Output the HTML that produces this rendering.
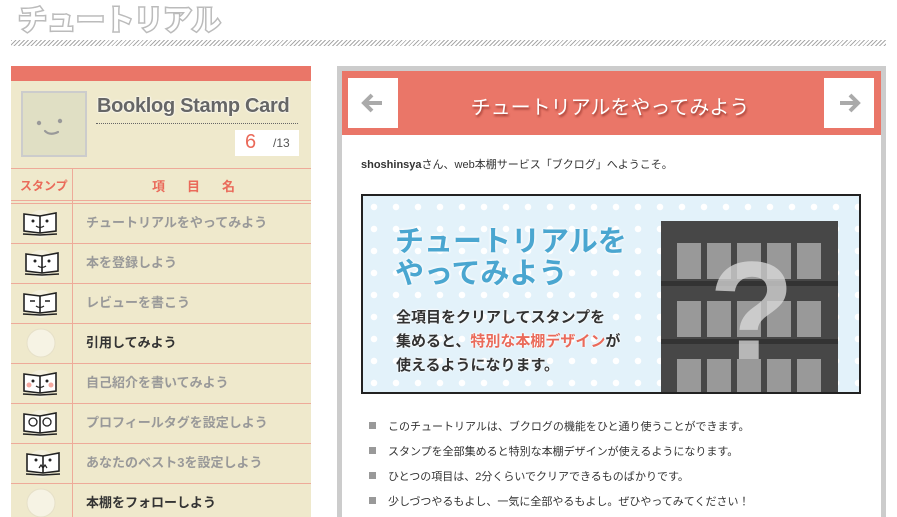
<!DOCTYPE html>
<html><head><meta charset="utf-8"><style>
*{margin:0;padding:0;box-sizing:border-box}
html,body{width:897px;height:517px;overflow:hidden}
body{background:#fff;position:relative;font-family:"Liberation Sans","Noto Sans CJK JP",sans-serif}
.a{position:absolute}
.h1{left:18px;top:3px;font-size:29px;line-height:36px;font-weight:bold;color:#fff;-webkit-text-stroke:3px #bbb;paint-order:stroke fill}
.hatch{left:11px;top:40px;width:875px;height:6px;background:repeating-linear-gradient(135deg,#aaa 0 1px,#fff 1px 3px)}
.card{left:11px;top:66px;width:300px;height:451px;background:#efe9cc}
.rows div.r{position:absolute;left:0;width:300px;height:40px;border-top:1px solid #eeaa99}
.rows .t{position:absolute;left:75px;top:8px;font-size:13px;font-weight:bold;color:#999}
.rows .t.d{color:#333}
.ic{position:absolute;left:10px;top:3px}
.bl{position:absolute;left:0;font-size:11px;color:#333}
.bl i{position:absolute;left:369px;width:7px;height:7px;background:#999}
.dots{background-color:#e3f2fa;background-image:radial-gradient(circle,#fff 3px,transparent 3.5px);background-size:22px 22px}
</style></head><body>
<div class="a hatch"></div>
<div class="a h1">チュートリアル</div>

<div class="a card">
 <div class="a" style="left:0;top:0;width:300px;height:15px;background:#ea7668"></div>
 <div class="a" style="left:10px;top:25px;width:66px;height:66px;border:2px solid #ccc;background:#e0dfc4">
  <svg width="62" height="62"><circle cx="16" cy="30" r="2.2" fill="#999"/><circle cx="37" cy="28" r="2.2" fill="#999"/><path d="M22 38 q5 5 13 1" stroke="#999" stroke-width="2.2" fill="none" stroke-linecap="round"/></svg>
 </div>
 <div class="a" style="left:86px;top:29px;font-size:20px;font-weight:bold;color:#666;text-shadow:0 0 2px #fff,0 0 2px #fff;white-space:nowrap;letter-spacing:-0.3px">Booklog Stamp Card</div>
 <div class="a" style="left:85px;top:57px;width:202px;border-top:1px dotted #666"></div>
 <div class="a" style="left:224px;top:64px;width:64px;height:26px;background:#fff"><span class="a" style="left:10px;top:1px;font-size:20px;color:#ea6a5a">6</span><span class="a" style="left:38px;top:6px;font-size:12px;color:#555">/13</span></div>
 <div class="a" style="left:0;top:102px;width:300px;border-top:1px solid #eeaa99"></div>
 <div class="a" style="left:61px;top:102px;height:349px;border-left:1px solid #eeaa99"></div>
 <div class="a" style="left:9px;top:111px;font-size:12px;font-weight:bold;color:#ea6a5a">スタンプ</div>
 <div class="a" style="left:141px;top:110px;font-size:13px;font-weight:bold;color:#ea6a5a;letter-spacing:22px">項目名</div>
 <div class="a" style="left:0;top:134px;width:300px;border-top:1px solid #eeaa99"></div>
 <div class="rows">
  <div class="r" style="top:137px"><svg class="ic" width="40" height="32"><circle cx="20" cy="17" r="14" fill="#f4f0de"/><path d="M3 7 L19 9 L35 6 L35 24 L19 26 L3 24Z" fill="#fff" stroke="#222" stroke-width="1.6"/><path d="M19 9 V26 M2 27 L19 28 L36 27" stroke="#222" stroke-width="1.6" fill="none"/><circle cx="12" cy="14" r="1.5" fill="#222"/><circle cx="26" cy="14" r="1.5" fill="#222"/><path d="M15 19 q4 3 8 0" stroke="#222" fill="none" stroke-width="1.2"/></svg><span class="t">チュートリアルをやってみよう</span></div>
  <div class="r" style="top:177px"><svg class="ic" width="40" height="32"><circle cx="20" cy="17" r="14" fill="#f4f0de"/><path d="M5 7 L21 9 L37 6 L37 24 L21 26 L5 24Z" fill="#fff" stroke="#222" stroke-width="1.6"/><path d="M21 9 V26 M4 27 L21 28 L38 27" stroke="#222" stroke-width="1.6" fill="none"/><circle cx="14" cy="14" r="1.5" fill="#222"/><circle cx="28" cy="14" r="1.5" fill="#222"/><path d="M17 19 q4 3 8 0" stroke="#222" fill="none" stroke-width="1.2"/></svg><span class="t">本を登録しよう</span></div>
  <div class="r" style="top:217px"><svg class="ic" width="40" height="32"><circle cx="20" cy="17" r="14" fill="#f4f0de"/><path d="M3 7 L19 9 L35 6 L35 24 L19 26 L3 24Z" fill="#fff" stroke="#222" stroke-width="1.6"/><path d="M19 9 V26 M2 27 L19 28 L36 27 M9 14 h5 M24 14 h5" stroke="#222" stroke-width="1.6" fill="none"/><path d="M15 19 q4 3 8 0" stroke="#222" fill="none" stroke-width="1.2"/></svg><span class="t">レビューを書こう</span></div>
  <div class="r" style="top:257px"><svg class="ic" width="40" height="32"><circle cx="20" cy="16" r="14" fill="#f6f3e4" stroke="#e6e0c8"/></svg><span class="t d">引用してみよう</span></div>
  <div class="r" style="top:297px"><svg class="ic" width="40" height="32"><circle cx="20" cy="17" r="14" fill="#f4f0de"/><path d="M3 7 L19 9 L35 6 L35 24 L19 26 L3 24Z" fill="#fff" stroke="#222" stroke-width="1.6"/><path d="M19 9 V26 M2 27 L19 28 L36 27" stroke="#222" stroke-width="1.6" fill="none"/><circle cx="8" cy="18" r="2.5" fill="#f4a9a0"/><circle cx="30" cy="18" r="2.5" fill="#f4a9a0"/><circle cx="12" cy="14" r="1.5" fill="#222"/><circle cx="26" cy="14" r="1.5" fill="#222"/><path d="M15 19 q4 3 8 0" stroke="#222" fill="none" stroke-width="1.2"/></svg><span class="t">自己紹介を書いてみよう</span></div>
  <div class="r" style="top:337px"><svg class="ic" width="40" height="32"><circle cx="20" cy="17" r="14" fill="#f4f0de"/><path d="M3 7 L19 9 L35 6 L35 24 L19 26 L3 24Z" fill="#fff" stroke="#222" stroke-width="1.6"/><path d="M19 9 V26 M2 27 L19 28 L36 27" stroke="#222" stroke-width="1.6" fill="none"/><circle cx="12" cy="15" r="4" fill="none" stroke="#222" stroke-width="1.3"/><circle cx="26" cy="15" r="4" fill="none" stroke="#222" stroke-width="1.3"/></svg><span class="t">プロフィールタグを設定しよう</span></div>
  <div class="r" style="top:377px"><svg class="ic" width="40" height="32"><circle cx="20" cy="17" r="14" fill="#f4f0de"/><path d="M6 7 L22 9 L38 6 L38 24 L22 26 L6 24Z" fill="#fff" stroke="#222" stroke-width="1.6"/><path d="M22 9 V26 M5 27 L22 28 L39 27" stroke="#222" stroke-width="1.6" fill="none"/><circle cx="15" cy="13" r="1.5" fill="#222"/><circle cx="29" cy="13" r="1.5" fill="#222"/><path d="M18 21 l2-3 2 3 2-3 2 3" stroke="#222" fill="none" stroke-width="1.2"/></svg><span class="t">あなたのベスト3を設定しよう</span></div>
  <div class="r" style="top:417px"><svg class="ic" width="40" height="32"><circle cx="20" cy="16" r="14" fill="#f6f3e4" stroke="#e6e0c8"/></svg><span class="t d">本棚をフォローしよう</span></div>
 </div>
</div>

<div class="a" style="left:337px;top:66px;width:549px;height:451px;border:5px solid #ccc;border-bottom:none;background:#fff"></div>
<div class="a" style="left:342px;top:71px;width:539px;height:64px;background:#ea7668"></div>
<div class="a" style="left:348px;top:78px;width:50px;height:50px;background:#fff"><svg width="50" height="50"><path d="M34 25 H16 M24 17 L16 25 L24 33" stroke="#aaa" stroke-width="4" fill="none"/></svg></div>
<div class="a" style="left:824px;top:78px;width:50px;height:50px;background:#fff"><svg width="50" height="50"><path d="M16 25 H34 M26 17 L34 25 L26 33" stroke="#aaa" stroke-width="4" fill="none"/></svg></div>
<div class="a" style="left:400px;top:91px;width:420px;text-align:center;font-size:20px;color:#fff;text-shadow:1px 2px 2px #9a3a30">チュートリアルをやってみよう</div>
<div class="a" style="left:361px;top:156px;font-size:11px;color:#333;white-space:nowrap"><b>shoshinsya</b>さん、web本棚サービス「ブクログ」へようこそ。</div>

<div class="a dots" style="left:361px;top:194px;width:500px;height:200px;border:2px solid #222;overflow:hidden">
 <div class="a" style="left:32px;top:30px;font-size:29px;font-weight:bold;color:#4aa6d0;line-height:32px;text-shadow:0 0 3px #fff,0 0 3px #fff">チュートリアルを<br>やってみよう</div>
 <div class="a" style="left:33px;top:110px;font-size:15px;font-weight:bold;color:#333;line-height:24px;text-shadow:0 0 2px #fff,0 0 2px #fff">全項目をクリアしてスタンプを<br>集めると、<span style="color:#ea6a5a">特別な本棚デザイン</span>が<br>使えるようになります。</div>
 <div class="a" style="left:298px;top:25px;width:177px;height:180px;background:#474747">
  <div class="a" style="left:0;top:60px;width:177px;height:5px;background:#333"></div>
  <div class="a" style="left:0;top:118px;width:177px;height:5px;background:#333"></div>
  <div class="a" style="left:16px;top:22px;width:145px;height:36px;background:repeating-linear-gradient(90deg,#999 0 24px,transparent 24px 30px)"></div>
  <div class="a" style="left:16px;top:80px;width:145px;height:36px;background:repeating-linear-gradient(90deg,#999 0 24px,transparent 24px 30px)"></div>
  <div class="a" style="left:16px;top:138px;width:145px;height:40px;background:repeating-linear-gradient(90deg,#999 0 24px,transparent 24px 30px)"></div>
  <div class="a" style="left:48px;top:0px;font-size:140px;font-weight:bold;color:rgba(220,220,220,.75);line-height:180px">?</div>
 </div>
</div>

<div class="bl" style="top:418px"><i style="top:4px"></i><span class="a" style="left:388px;white-space:nowrap">このチュートリアルは、ブクログの機能をひと通り使うことができます。</span></div>
<div class="bl" style="top:443px"><i style="top:4px"></i><span class="a" style="left:388px;white-space:nowrap">スタンプを全部集めると特別な本棚デザインが使えるようになります。</span></div>
<div class="bl" style="top:468px"><i style="top:4px"></i><span class="a" style="left:388px;white-space:nowrap">ひとつの項目は、2分くらいでクリアできるものばかりです。</span></div>
<div class="bl" style="top:493px"><i style="top:4px"></i><span class="a" style="left:388px;white-space:nowrap">少しづつやるもよし、一気に全部やるもよし。ぜひやってみてください！</span></div>
</body></html>
